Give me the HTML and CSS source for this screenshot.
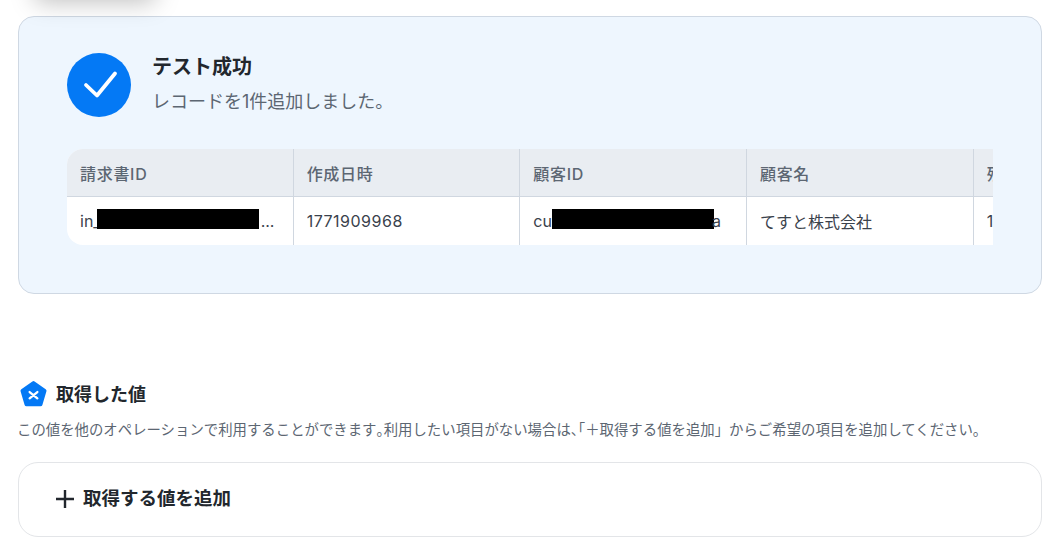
FILE: index.html
```html
<!DOCTYPE html>
<html lang="ja">
<head>
    <meta charset="UTF-8">
    <title>テスト成功</title>
    <link rel="stylesheet" href="styles.css">
</head>
<body>
    <div class="menu-shadow"></div>

    <div class="result-panel">
        <div class="result-head">
            <svg class="check-circle" width="64" height="64" viewBox="0 0 64 64">
                <circle cx="32" cy="32" r="32" fill="#0479f5"/>
                <path d="M19 32 L30 42.5 L48 20.5" fill="none" stroke="#fff" stroke-width="3.8" stroke-linecap="round" stroke-linejoin="round"/>
            </svg>
            <div class="result-text">
                <div class="result-title">テスト成功</div>
                <div class="result-sub">レコードを1件追加しました。</div>
            </div>
        </div>

        <div class="table-wrap">
            <div class="table-row table-header">
                <div class="cell">請求書ID</div>
                <div class="cell">作成日時</div>
                <div class="cell">顧客ID</div>
                <div class="cell">顧客名</div>
                <div class="cell">残高</div>
            </div>
            <div class="table-row">
                <div class="cell">in_<span class="redact redact-in"></span>...</div>
                <div class="cell cell-num">1771909968</div>
                <div class="cell">cu<span class="redact redact-cu"></span>a</div>
                <div class="cell">てすと株式会社</div>
                <div class="cell cell-num">1000</div>
            </div>
        </div>
    </div>

    <div class="values-head">
        <svg width="27" height="27" viewBox="0 0 28 28">
            <path d="M14 3.2 L25.5 11.2 L21.3 25.3 L6.7 25.3 L2.5 11.2 Z" fill="#0479f5" stroke="#0479f5" stroke-width="4" stroke-linejoin="round"/>
            <path d="M10 12.5 L18 19 M18 12.5 L10 19" fill="none" stroke="#fff" stroke-width="2.4" stroke-linecap="round"/>
        </svg>
        <div class="values-title">取得した値</div>
    </div>
    <p class="values-desc">この値を他のオペレーションで利用することができます<span class="tight">。</span>利用したい項目がない場合は<span class="tight">、</span>「＋取得する値を追加」からご希望の項目を追加してください。</p>

    <div class="add-value">
        <svg width="18" height="18" viewBox="0 0 18 18"><path d="M9 0 V18 M0 9 H18" stroke="#22272d" stroke-width="2.4"/></svg>
        <span>取得する値を追加</span>
    </div>
</body>
</html>
```

FILE: styles.css
```css
* {
    margin: 0;
    padding: 0;
    box-sizing: border-box;
}

html, body {
    height: 550px;
    overflow: hidden;
}

body {
    font-family: 'Inter', 'Noto Sans CJK JP', sans-serif;
    background: #fff;
    color: #22272d;
    padding: 16px 16px 0 18px;
    position: relative;
}

.menu-shadow {
    position: absolute;
    left: 35px;
    top: -30px;
    width: 120px;
    height: 30px;
    box-shadow: 0 2px 24px rgba(0, 0, 0, 0.26);
}

.result-panel {
    height: 278px;
    background: #eef6fe;
    border: 1px solid #cfd8e3;
    border-radius: 16px;
    padding: 36px 48px 48px;
}

.result-head {
    display: flex;
    align-items: center;
    gap: 21px;
    margin-bottom: 32px;
}

.check-circle {
    display: block;
}

.result-title {
    font-size: 20px;
    font-weight: 700;
    line-height: 28px;
    margin-top: -3px;
    margin-bottom: 8px;
}

.result-sub {
    font-size: 18px;
    line-height: 26px;
    color: #5c6672;
}

.table-wrap {
    height: 96px;
    border-radius: 16px 0 0 16px;
    overflow: hidden;
    background: #fff;
}

.table-row {
    display: flex;
    height: 48px;
}

.table-header {
    background: #e9edf2;
    border-bottom: 1px solid #d0d7e0;
    color: #5c6672;
    font-weight: 500;
    letter-spacing: 0.7px;
}

.cell {
    flex: 0 0 226.67px;
    display: flex;
    align-items: center;
    padding: 0 13px;
    font-size: 16px;
    color: inherit;
    white-space: nowrap;
    overflow: hidden;
    border-right: 1px solid #d0d7e0;
}

.table-row:not(.table-header) .cell {
    color: #3a424c;
}

.table-row:not(.table-header) .cell-num {
    letter-spacing: 0.5px;
}

.redact {
    display: inline-block;
    flex: none;
    width: 162px;
    height: 20px;
    margin-top: -5px;
    background: #000;
}

.redact-in {
    margin-left: -4px;
    margin-right: 2px;
}

.redact-cu {
    margin-right: -2px;
}

.values-head {
    display: flex;
    align-items: center;
    gap: 9px;
    margin-top: 85px;
    padding-left: 2px;
    height: 28px;
}

.values-title {
    font-size: 18px;
    font-weight: 700;
}

.values-desc {
    font-size: 14.4px;
    line-height: 20px;
    color: #5c6672;
    margin-top: 13px;
    margin-left: -1px;
    white-space: nowrap;
}

.tight {
    font-feature-settings: "halt";
}

.add-value {
    display: flex;
    align-items: center;
    gap: 9px;
    height: 75px;
    margin-top: 22px;
    padding-left: 37px;
    padding-bottom: 5px;
    border: 1px solid #e3e5e8;
    border-radius: 20px;
    font-size: 18.5px;
    font-weight: 700;
}

.add-value svg {
    margin-top: 3px;
}
```
